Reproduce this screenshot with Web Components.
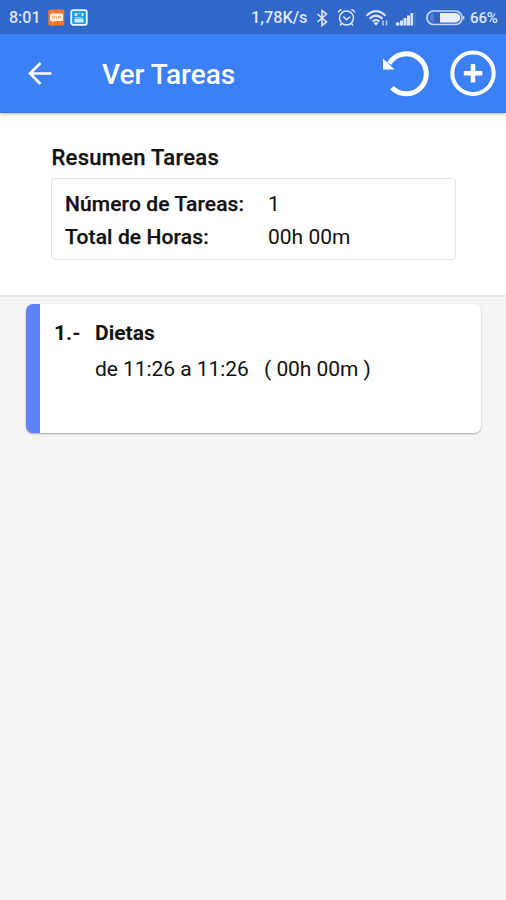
<!DOCTYPE html>
<html lang="es">
<head>
<meta charset="utf-8">
<title>Ver Tareas</title>
<style>
body { margin: 0; background: #f5f5f5; font-family: Roboto, "Liberation Sans", sans-serif; color: #111; }
</style>
</head>
<body>
<tareas-app></tareas-app>
<script>
const define = (name, html) => customElements.define(name, class extends HTMLElement {
  constructor() {
    super();
    const t = document.createElement('template');
    t.innerHTML = html;
    this.attachShadow({ mode: 'open' }).append(t.content.cloneNode(true));
  }
});

define('status-bar', `
<style>
:host { display: flex; align-items: center; height: 34px; box-sizing: border-box; padding: 1px 8px 0 9px; background: #3067c9; color: #dce7ff; font-size: 16px; font-weight: 500; white-space: nowrap; }
svg { display: block; flex: none; }
.time { width: 39px; font-size: 16px; }
.speed { width: 57px; font-size: 16.3px; }
.grow { flex: 1; }
.pct { width: 28px; font-size: 15px; letter-spacing: -.1px; padding-top: 1px; }
</style>
<span class="time">8:01</span>
<svg width="17" height="17" viewBox="0 0 17 17"><rect x=".3" y=".5" width="16" height="16" rx="1.5" fill="#f4772a"/><path d="M3.500 4.500h10q1.500 0 1.500 1.500v4.500q0 1.500-1.500 1.500H7l-2.500 1.500v-1.500h-1Q2 12 2 10.500v-4.500Q2 4.500 3.500 4.500z" fill="#fff0e6"/><path d="M4.500 9.800V7.500h2v2M8.500 7.500v2M10.500 9.800V7.500h2v2" fill="none" stroke="#f79a60"/></svg>
<svg style="margin-left:5px" width="18" height="17" viewBox="0 0 18 17"><rect x="1.200" y="1.200" width="15.600" height="14.600" rx="2" fill="#239bdc" stroke="#e9faff" stroke-width="1.800"/><path d="M4.500 4h3v3h-3zM11.500 4h2v3h-2zM4.500 9.500h9v4h-9z" fill="#c4ecfb"/><path d="M8 4.500h2M5 8.500h8" stroke="#72d1f5"/></svg>
<span class="grow"></span>
<span class="speed">1,78K/s</span>
<svg style="margin-left:8px" width="12" height="18" viewBox="0 0 12 18"><path d="M1.500 5l9 8L6 16.500v-15L10.500 5l-9 8" fill="none" stroke="#dce7ff" stroke-width="1.600"/></svg>
<svg style="margin-left:9px" width="19" height="19" viewBox="0 0 19 19"><g fill="none" stroke="#dce7ff" stroke-width="1.500"><circle cx="9.500" cy="10" r="7"/><path d="M6.300 8.500l3.200 3.200 3.500-3M1.200 4.600Q2 2.200 4.600 1.500M17.800 4.600Q17 2.200 14.400 1.500M4.500 15.500L3 17.500M14.500 15.500L16 17.500"/></g></svg>
<svg style="margin-left:9px" width="24" height="18" viewBox="0 0 24 18"><g fill="none" stroke="#dce7ff" stroke-width="2"><path d="M1.500 6.700Q11 -2.500 20.500 6.700M4.500 9.700Q11 3.500 17.500 9.700M7.500 12.600Q11 9.300 14.500 12.600"/></g><path d="M8.600 14Q11 12 13.400 14L11 16.700z" fill="#dce7ff"/><path d="M18 11.500v5M21.500 11.500v5" stroke="#b4cbf4" stroke-width="1.600"/></svg>
<svg style="margin-left:7px" width="21" height="16" viewBox="0 0 21 16"><g fill="#dce7ff"><path d="M0 12.500h3.400V15.500H0zM4 10.500h3v5H4zM7.500 8h3v7.500h-3zM11 5.500h3v10h-3zM14.500 3h2.600v12.500h-2.600z"/></g><path d="M19 2v13.500" stroke="#4678d2" stroke-width="1.500"/></svg>
<svg style="margin-left:9px" width="39" height="17" viewBox="0 0 39 17"><rect x="1" y="2" width="35" height="13.500" rx="6.700" fill="none" stroke="#c6d7f8" stroke-width="1.700"/><path d="M14 4h15.500a4.750 4.750 0 010 9.500H14z" fill="#e9f0ff"/><path d="M8 4.200h6v9H8z" fill="#3062c0"/><path d="M8 4.200v9a4.500 4.500 0 010-9z" fill="#4d7dd5"/><path d="M37.700 7v3.500" stroke="#c6d7f8" stroke-width="1.300"/></svg>
<span class="pct" style="margin-left:5px">66%</span>
`);

define('app-bar', `
<style>
:host { display: flex; align-items: center; height: 79px; background: #3b81f5; color: #fff; border-bottom: 1px solid #3479d9; box-shadow: 0 1px 3px rgba(0,0,0,.3); box-sizing: border-box; position: relative; padding: 0 9px 0 28px; }
h1 { margin: 4px 0 0 50px; flex: 1; font-size: 28px; line-height: 32px; font-weight: 500; }
svg { display: block; flex: none; }
</style>
<svg width="24" height="24" viewBox="0 0 24 24"><path d="M23.500 12.500H2.500M12.500 2L2 12.500 12.500 23" fill="none" stroke="#fff" stroke-width="2.600"/></svg>
<h1><slot></slot></h1>
<svg width="48" height="48" viewBox="0 0 48 48"><path d="M6.200 14.500A20 20 0 1 1 9 38.800" fill="none" stroke="#fff" stroke-width="5"/><path d="M0 9.500L11.500 20.600H0z" fill="#fff"/></svg>
<svg style="margin-left:19px" width="47" height="48" viewBox="0 0 47 48"><circle cx="23" cy="24.300" r="20.700" fill="none" stroke="#fff" stroke-width="4"/><path d="M13.800 24.300h18.500M23 15v18.600" stroke="#fff" stroke-width="4.500"/></svg>
`);

define('task-summary', `
<style>
:host { display: block; height: 184px; box-sizing: border-box; padding: 32px 50px 0 51px; background: #fff; border-bottom: 2px solid #e8e8e8; }
h2 { margin: 0 0 7px .5px; font-size: 22px; line-height: 26px; font-weight: 500; letter-spacing: .27px; -webkit-text-stroke: .25px; }
dl { margin: 0; height: 82px; box-sizing: border-box; border: 1.500px solid #e4e4e4; border-radius: 4px; padding: 9px 13px; display: grid; grid-template-columns: 203px 1fr; grid-auto-rows: 33px; line-height: 33px; }
::slotted(dt) { font-weight: 500; font-size: 21px; letter-spacing: .12px; -webkit-text-stroke: .25px; white-space: nowrap; }
::slotted(dd) { margin: 0; font-size: 21px; }
</style>
<h2><slot name="title"></slot></h2>
<dl><slot></slot></dl>
`);

define('task-card', `
<style>
:host { display: grid; grid-template-columns: 41px 1fr; grid-template-rows: 36px 36px; box-sizing: border-box; height: 129px; margin: 7px 25px 0 26px; padding: 11px 0 0 14px; border-left: 14px solid #5f82f8; border-radius: 7px; background: #fff; box-shadow: 0 1px 2px rgba(0,0,0,.32); line-height: 36px; font-size: 21px; }
b { font-weight: 700; }
.hours { grid-column: 2; white-space: pre; letter-spacing: -.06px; }
</style>
<b><slot name="number"></slot></b><b><slot name="name"></slot></b>
<span class="hours"><slot></slot></span>
`);

define('tareas-app', `
<style>
:host { display: flex; flex-direction: column; height: 900px; overflow: hidden; }
</style>
<status-bar></status-bar>
<app-bar>Ver Tareas</app-bar>
<task-summary><span slot="title">Resumen Tareas</span><dt>Número de Tareas:</dt><dd>1</dd><dt>Total de Horas:</dt><dd>00h 00m</dd></task-summary>
<task-card><span slot="number">1.-</span><span slot="name">Dietas</span>de 11:26 a 11:26&nbsp;&nbsp; ( 00h 00m )</task-card>
`);
</script>
</body>
</html>
